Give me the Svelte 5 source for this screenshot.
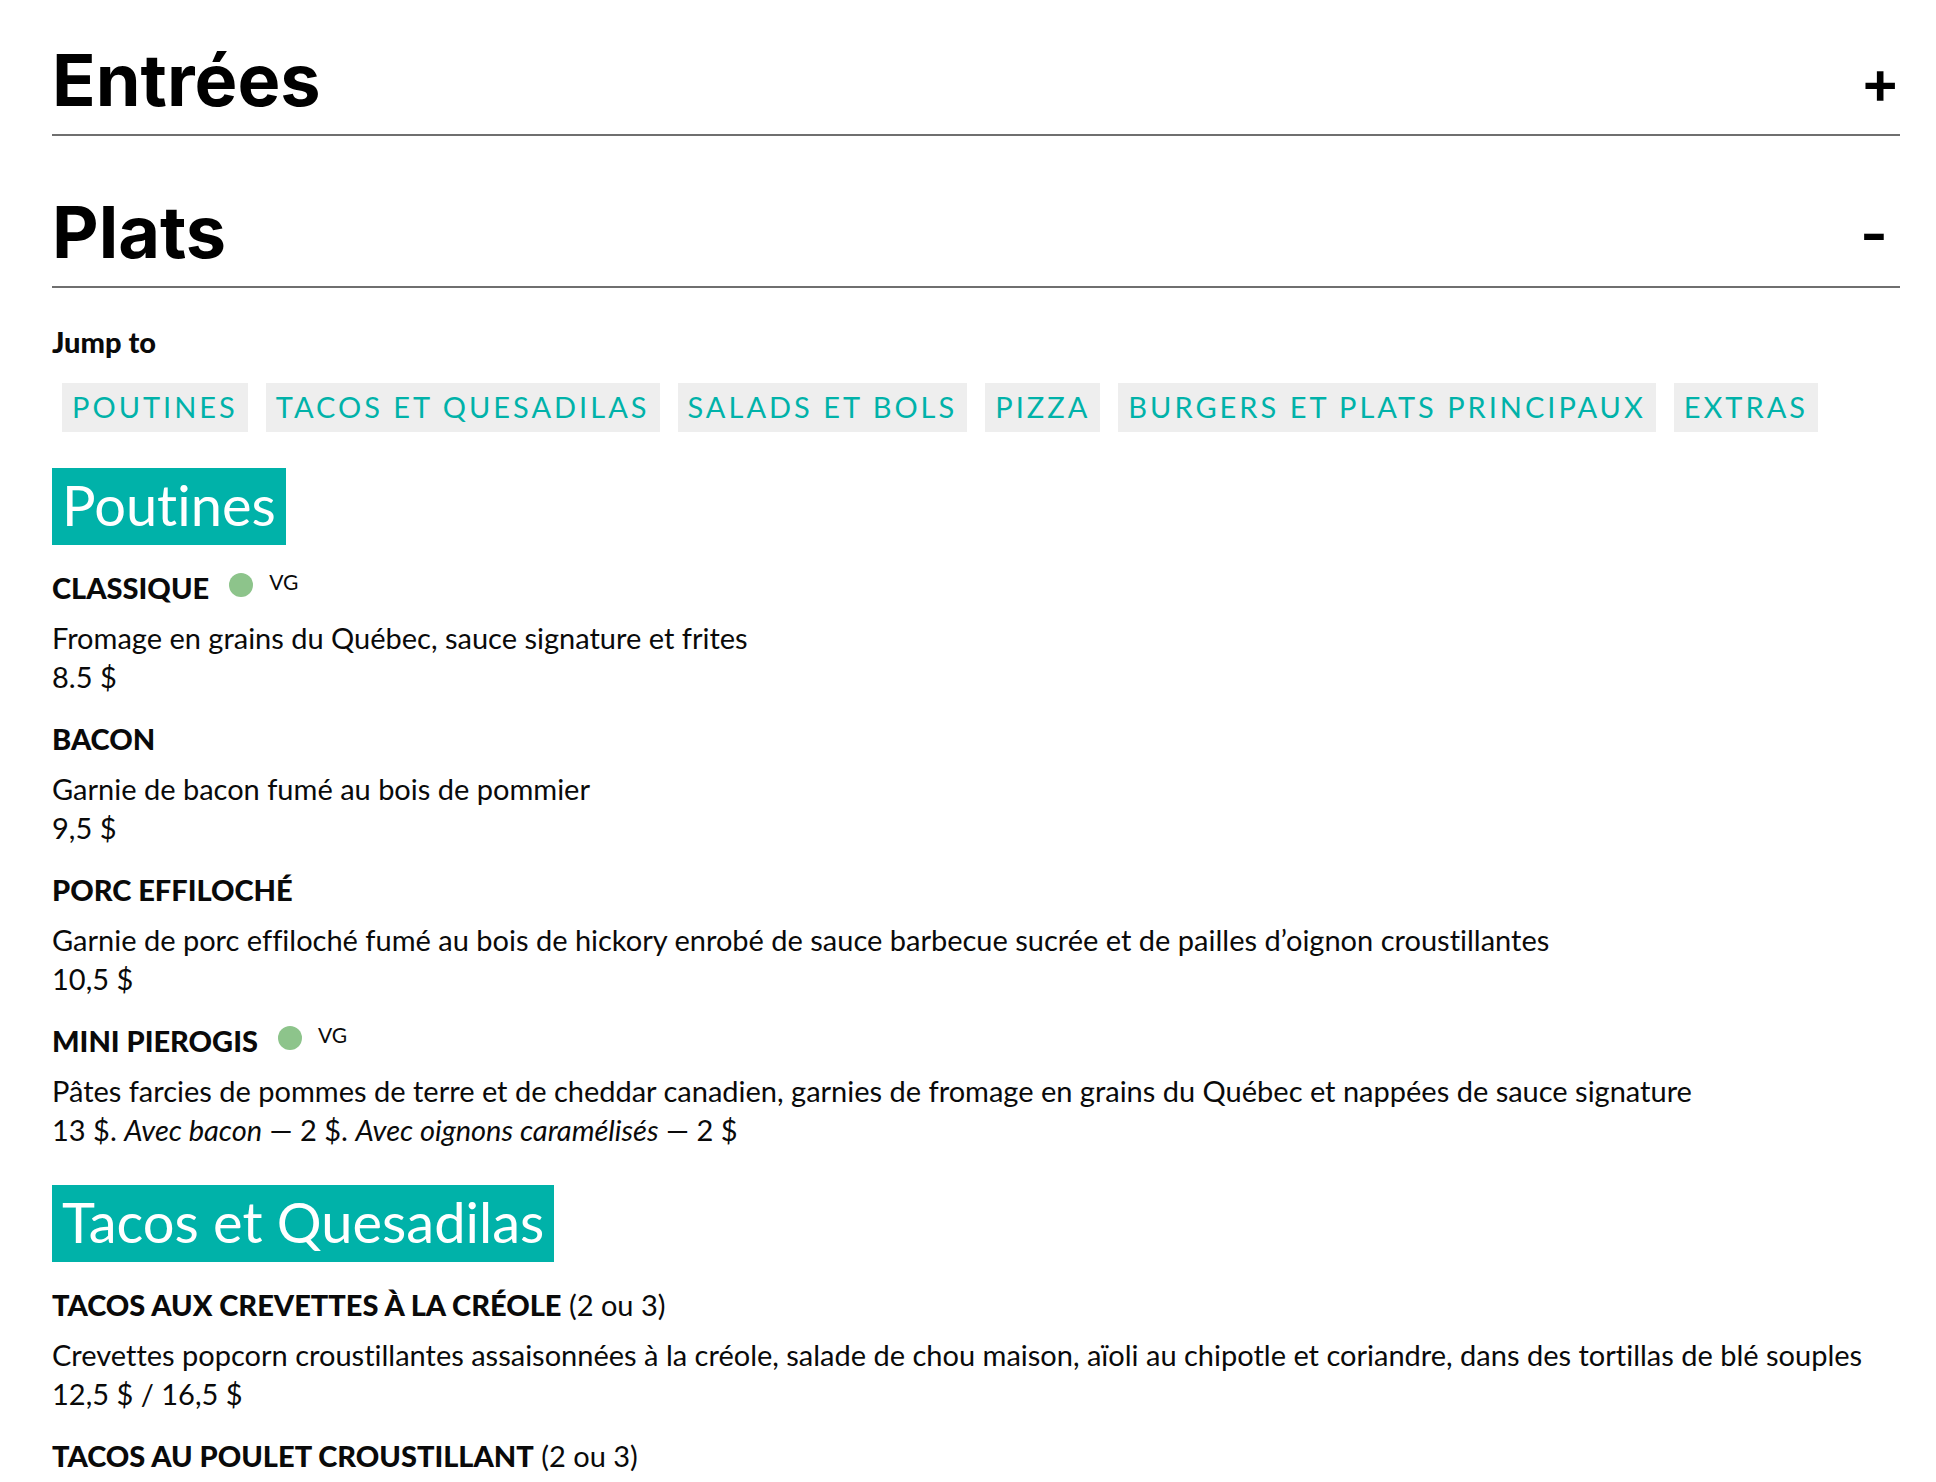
<script lang="ts">
  type Item = {
    name: string;
    note?: string;
    vegetarian?: boolean;
    description?: string;
    price?: { text: string; em?: boolean }[];
  };
  type Group = { id: string; title: string; items: Item[] };

  const links = [
    { id: 'poutines', label: 'POUTINES' },
    { id: 'tacos', label: 'TACOS ET QUESADILAS' },
    { id: 'salads', label: 'SALADS ET BOLS' },
    { id: 'pizza', label: 'PIZZA' },
    { id: 'burgers', label: 'BURGERS ET PLATS PRINCIPAUX' },
    { id: 'extras', label: 'EXTRAS' },
  ];

  const groups: Group[] = [
    {
      id: 'poutines',
      title: 'Poutines',
      items: [
        {
          name: 'CLASSIQUE',
          vegetarian: true,
          description: 'Fromage en grains du Québec, sauce signature et frites',
          price: [{ text: '8.5 $' }],
        },
        {
          name: 'BACON',
          description: 'Garnie de bacon fumé au bois de pommier',
          price: [{ text: '9,5 $' }],
        },
        {
          name: 'PORC EFFILOCHÉ',
          description:
            'Garnie de porc effiloché fumé au bois de hickory enrobé de sauce barbecue sucrée et de pailles d’oignon croustillantes',
          price: [{ text: '10,5 $' }],
        },
        {
          name: 'MINI PIEROGIS',
          vegetarian: true,
          description:
            'Pâtes farcies de pommes de terre et de cheddar canadien, garnies de fromage en grains du Québec et nappées de sauce signature',
          price: [
            { text: '13 $. ' },
            { text: 'Avec bacon', em: true },
            { text: ' — 2 $. ' },
            { text: 'Avec oignons caramélisés', em: true },
            { text: ' — 2 $' },
          ],
        },
      ],
    },
    {
      id: 'tacos',
      title: 'Tacos et Quesadilas',
      items: [
        {
          name: 'TACOS AUX CREVETTES À LA CRÉOLE',
          note: '(2 ou 3)',
          description:
            'Crevettes popcorn croustillantes assaisonnées à la créole, salade de chou maison, aïoli au chipotle et coriandre, dans des tortillas de blé souples',
          price: [{ text: '12,5 $ / 16,5 $' }],
        },
        { name: 'TACOS AU POULET CROUSTILLANT', note: '(2 ou 3)' },
      ],
    },
  ];

  let startersOpen = $state(false);
  let mainsOpen = $state(true);
</script>

<main>
  <h2>
    <button type="button" aria-expanded={startersOpen} onclick={() => (startersOpen = !startersOpen)}>
      <span>Entrées</span><span class="sign">{startersOpen ? '-' : '+'}</span>
    </button>
  </h2>
  <h2>
    <button type="button" aria-expanded={mainsOpen} onclick={() => (mainsOpen = !mainsOpen)}>
      <span>Plats</span><span class="sign">{mainsOpen ? '-' : '+'}</span>
    </button>
  </h2>

  {#if mainsOpen}
    <p class="jump" id="jump">Jump to</p>
    <nav aria-labelledby="jump">
      {#each links as link}
        <a href={`#${link.id}`}>{link.label}</a>
      {/each}
    </nav>

    {#each groups as group}
      <section id={group.id}>
        <h3>{group.title}</h3>
        {#each group.items as item}
          <article>
            <h4>
              <span><strong>{item.name}</strong>{#if item.note}{' '}{item.note}{/if}</span>
              {#if item.vegetarian}
                <span class="dot"></span><small>VG</small>
              {/if}
            </h4>
            {#if item.description}
              <p>{item.description}</p>
            {/if}
            {#if item.price}
              <p>{#each item.price as part}{#if part.em}<em>{part.text}</em>{:else}{part.text}{/if}{/each}</p>
            {/if}
          </article>
        {/each}
      </section>
    {/each}
  {/if}
</main>

<style>
  :global(body) {
    margin: 0;
    background: #fff;
  }
  main {
    padding: 24px 36px 0 52px;
    font-family: Lato, 'Open Sans', sans-serif;
    font-size: 29px;
    font-variant-ligatures: none;
    line-height: 39px;
    color: #0a0a0a;
  }
  h2,
  h3,
  h4,
  p {
    margin: 0;
    font: inherit;
    font-variant-ligatures: none;
  }
  h2 {
    border-bottom: 2px solid #6f6f6f;
  }
  h2 + h2 {
    margin-top: 40px;
  }
  button {
    display: flex;
    width: 100%;
    justify-content: space-between;
    align-items: center;
    padding: 2px 0 0;
    border: 0;
    background: none;
    color: #000;
    font-family: Inter, sans-serif;
    font-size: 72px;
    font-weight: 700;
    line-height: 108px;
    text-align: left;
    cursor: pointer;
  }
  .sign {
    width: 40px;
    padding-top: 2px;
    font-size: 60px;
    font-weight: 600;
    line-height: 106px;
  }
  .jump {
    margin: 34px 0 22px;
    font-weight: 900;
  }
  nav {
    display: flex;
    flex-wrap: wrap;
    gap: 18px;
    padding-left: 10px;
  }
  nav a {
    padding: 4px 10px 6px;
    background: #eee;
    color: #00b2a9;
    letter-spacing: 3px;
    text-decoration: none;
  }
  section {
    margin-top: 36px;
  }
  h3 {
    width: fit-content;
    margin-bottom: 23px;
    padding: 0 10px 4px;
    background: #00b2a9;
    color: #fff;
    font-size: 56px;
    line-height: 73px;
  }
  article {
    margin-bottom: 23px;
  }
  h4 {
    display: flex;
    margin-bottom: 11px;
  }
  strong {
    font-weight: 900;
  }
  .dot {
    width: 24px;
    height: 24px;
    margin: 5px 16px 0 20px;
    border-radius: 50%;
    background: #8dc48b;
  }
  small {
    font-size: 21px;
    line-height: 28px;
  }
</style>
